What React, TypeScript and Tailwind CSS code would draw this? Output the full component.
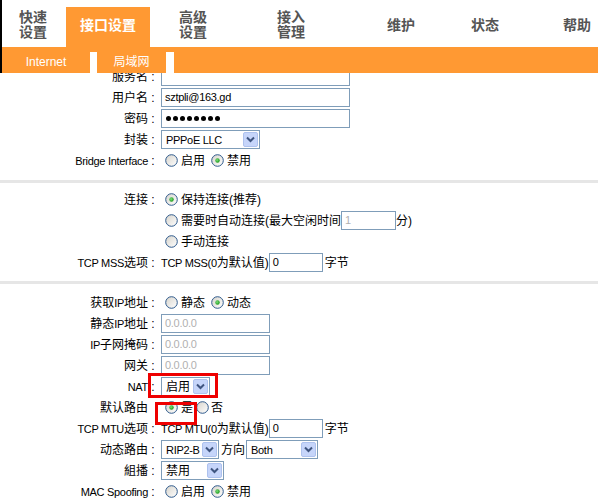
import React from "react";

const L = ({ children }: { children: React.ReactNode }) => (
  <span className="text-[11px] tracking-[-0.3px]">{children}</span>
);

const Radio = ({ checked }: { checked?: boolean }) => (
  <svg width="13" height="13" viewBox="0 0 13 13" className="shrink-0">
    <defs>
      <linearGradient id="rgFill" x1="0" y1="0" x2="1" y2="1">
        <stop offset="0" stopColor="#d6d3cb" />
        <stop offset="1" stopColor="#ffffff" />
      </linearGradient>
      <radialGradient id="rgDot" cx="0.4" cy="0.4" r="0.6">
        <stop offset="0" stopColor="#7be07b" />
        <stop offset="1" stopColor="#1f9a1f" />
      </radialGradient>
    </defs>
    <circle cx="6.5" cy="6.5" r="5.8" fill="url(#rgFill)" stroke="#2f5a8c" strokeWidth="1" />
    {checked && <circle cx="6.5" cy="6.5" r="2.2" fill="url(#rgDot)" />}
  </svg>
);

const Chevron = () => (
  <svg width="9" height="7" viewBox="0 0 9 7">
    <path d="M1 1.5 L4.5 5 L8 1.5" fill="none" stroke="#3f5580" strokeWidth="2" />
  </svg>
);

const Select = ({ children, className }: { children: React.ReactNode; className: string }) => (
  <div
    className={`${className} h-[19px] border border-[#7f9db9] bg-white flex items-center justify-between pl-[4px] pr-[1px] shrink-0`}
  >
    <span className="leading-none">{children}</span>
    <div className="w-[15px] h-[15px] rounded-[2px] bg-[#c6d5fa] border border-[#aec2ee] flex items-center justify-center">
      <Chevron />
    </div>
  </div>
);

const Input = ({
  children,
  className,
  gray,
}: {
  children?: React.ReactNode;
  className: string;
  gray?: boolean;
}) => (
  <div
    className={`${className} h-[19px] border border-[#7f9db9] bg-white flex items-center px-[3px] shrink-0 ${
      gray ? "text-[#b0b0b0]" : "text-black"
    }`}
  >
    {children}
  </div>
);

const Row = ({
  label,
  colon = true,
  children,
}: {
  label?: React.ReactNode;
  colon?: boolean;
  children?: React.ReactNode;
}) => (
  <div className="flex h-[21px] items-center">
    <div className="w-[158px] shrink-0 flex justify-end items-center">
      <span className="whitespace-nowrap">{label}</span>
      <span className="w-[10px] text-center">{label && colon ? ":" : ""}</span>
    </div>
    <div className="ml-[3px] flex items-center whitespace-nowrap">{children}</div>
  </div>
);

const RadioOpt = ({ checked, children, first }: { checked?: boolean; children: React.ReactNode; first?: boolean }) => (
  <div className={`flex items-center ${first ? "ml-[4px]" : "ml-[6px]"}`}>
    <Radio checked={checked} />
    <span className="ml-[3px]">{children}</span>
  </div>
);

const Divider = () => <div className="h-[3px] bg-[#e6e6e6]" />;

export default function App() {
  return (
    <div className="relative w-[598px] h-[499px] overflow-hidden bg-white flex flex-col text-[12px] text-black font-['Liberation_Sans','Noto_Sans_CJK_SC',sans-serif]">
      {/* top nav */}
      <div className="flex h-[47px] bg-white shrink-0 text-[14px] font-bold leading-[15px] text-[#555555]">
        <div className="w-[2px] bg-black" />
        <div className="w-[64px] pl-[17px] pt-[3px] flex items-center">
          <span>
            快速
            <br />
            设置
          </span>
        </div>
        <div className="w-[84px] self-end h-[40px] bg-[#ff9933] flex items-center justify-center pb-[4px] text-white">
          <span>接口设置</span>
        </div>
        <div className="w-[100px] pl-[29px] pt-[3px] flex items-center">
          <span>
            高级
            <br />
            设置
          </span>
        </div>
        <div className="w-[110px] pl-[27px] pt-[3px] flex items-center">
          <span>
            接入
            <br />
            管理
          </span>
        </div>
        <div className="w-[90px] pl-[27px] pt-[3px] flex items-center">
          <span>维护</span>
        </div>
        <div className="w-[90px] pl-[21px] pt-[3px] flex items-center">
          <span>状态</span>
        </div>
        <div className="flex-1 pl-[23px] pt-[3px] flex items-center">
          <span>帮助</span>
        </div>
      </div>

      {/* sub nav */}
      <div className="flex h-[26px] bg-[#ff9933] shrink-0 text-white text-[12px]">
        <div className="w-[2px] bg-black" />
        <div className="w-[88px] flex items-center justify-center pt-[3px]">Internet</div>
        <div className="w-[7px] self-end h-[21px] bg-white" />
        <div className="w-[69px] flex items-center justify-center pt-[3px]">局域网</div>
        <div className="w-[8px] self-end h-[21px] bg-white" />
        <div className="flex-1" />
      </div>

      {/* content */}
      <div className="flex-1 overflow-hidden">
        <div className="mt-[-7px] pb-[9px]">
          <Row label="服务名">
            <Input className="w-[189px]" />
          </Row>
          <Row label="用户名">
            <Input className="w-[189px]">
              <L>sztpli@163.gd</L>
            </Input>
          </Row>
          <Row label="密码">
            <Input className="w-[189px]">
              <div className="flex gap-[2px] ml-[1px]">
                {Array.from({ length: 8 }).map((_, i) => (
                  <div key={i} className="w-[5px] h-[5px] rounded-full bg-black" />
                ))}
              </div>
            </Input>
          </Row>
          <Row label="封装">
            <Select className="w-[99px]">
              <L>PPPoE LLC</L>
            </Select>
          </Row>
          <Row label={<L>Bridge Interface</L>}>
            <RadioOpt first>启用</RadioOpt>
            <RadioOpt checked>禁用</RadioOpt>
          </Row>
        </div>
        <Divider />
        <div className="pt-[6px] pb-[8px]">
          <Row label="连接">
            <RadioOpt first checked>
              保持连接(推荐)
            </RadioOpt>
          </Row>
          <Row>
            <RadioOpt first>需要时自动连接(最大空闲时间</RadioOpt>
            <Input className="w-[55px]" gray>
              <L>1</L>
            </Input>
            <span>分)</span>
          </Row>
          <Row>
            <RadioOpt first>手动连接</RadioOpt>
          </Row>
          <Row
            label={
              <>
                <L>TCP MSS</L>选项
              </>
            }
          >
            <span>
              <L>TCP MSS(0</L>为默认值)
            </span>
            <Input className="w-[54px]">
              <L>0</L>
            </Input>
            <span className="ml-[2px]">字节</span>
          </Row>
        </div>
        <Divider />
        <div className="pt-[8px]">
          <Row
            label={
              <>
                获取<L>IP</L>地址
              </>
            }
          >
            <RadioOpt first>静态</RadioOpt>
            <RadioOpt checked>动态</RadioOpt>
          </Row>
          <Row
            label={
              <>
                静态<L>IP</L>地址
              </>
            }
          >
            <Input className="w-[109px]" gray>
              <L>0.0.0.0</L>
            </Input>
          </Row>
          <Row
            label={
              <>
                <L>IP</L>子网掩码
              </>
            }
          >
            <Input className="w-[109px]" gray>
              <L>0.0.0.0</L>
            </Input>
          </Row>
          <Row label="网关">
            <Input className="w-[109px]" gray>
              <L>0.0.0.0</L>
            </Input>
          </Row>
          <Row label={<L>NAT</L>}>
            <Select className="w-[49px]">启用</Select>
          </Row>
          <Row label="默认路由" colon={false}>
            <RadioOpt first checked>
              是
            </RadioOpt>
            <div className="flex items-center ml-[3px]">
              <Radio />
              <span className="ml-[2px]">否</span>
            </div>
          </Row>
          <Row
            label={
              <>
                <L>TCP MTU</L>选项
              </>
            }
          >
            <span>
              <L>TCP MTU(0</L>为默认值)
            </span>
            <Input className="w-[54px]">
              <L>0</L>
            </Input>
            <span className="ml-[2px]">字节</span>
          </Row>
          <Row label="动态路由">
            <Select className="w-[58px]">
              <L>RIP2-B</L>
            </Select>
            <span className="ml-[2px] mr-[1px]">方向</span>
            <Select className="w-[72px]">
              <L>Both</L>
            </Select>
          </Row>
          <Row label="組播">
            <Select className="w-[63px]">禁用</Select>
          </Row>
          <Row label={<L>MAC Spoofing</L>}>
            <RadioOpt first>启用</RadioOpt>
            <RadioOpt checked>禁用</RadioOpt>
          </Row>
        </div>
      </div>

      {/* red annotation boxes */}
      <div className="absolute left-[148px] top-[373px] w-[70px] h-[25px] border-[3px] border-[#ee0000]" />
      <div className="absolute left-[155px] top-[402px] w-[42px] h-[23px] border-[3px] border-[#ee0000]" />
    </div>
  );
}
